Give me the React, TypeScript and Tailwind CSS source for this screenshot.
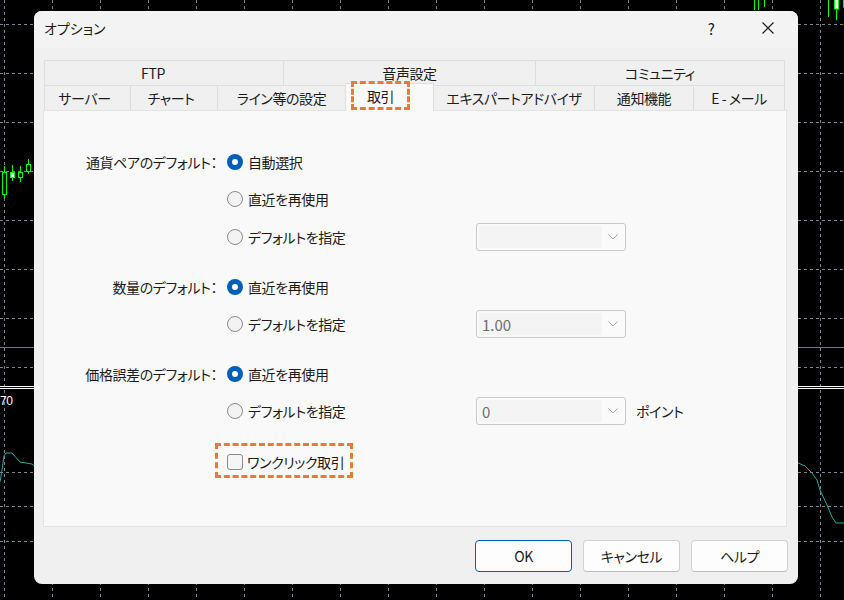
import React from "react";

const vx = Array.from({ length: 18 }, (_, i) => 4 + 48 * i);
const hy = [24, 73, 122, 171, 220, 269, 318, 367, 472, 506, 541];
const G = "#00ff00";

function ChartBg() {
  return (
    <svg className="absolute inset-0" width="844" height="600" viewBox="0 0 844 600">
      <rect width="844" height="600" fill="#000" />
      {vx.map((x) => (
        <line key={"v" + x} x1={x + 0.5} y1={0} x2={x + 0.5} y2={600} stroke="#7a8698" strokeDasharray="3 3" />
      ))}
      {hy.map((y) => (
        <line key={"h" + y} x1={0} y1={y + 0.5} x2={844} y2={y + 0.5} stroke="#7a8698" strokeDasharray="3 3" />
      ))}
      <line x1={0} y1={347.5} x2={844} y2={347.5} stroke="#6c7889" />
      <line x1={0} y1={386.5} x2={844} y2={386.5} stroke="#ffffff" />
      <line x1={0} y1={388.5} x2={844} y2={388.5} stroke="#ffffff" />
      {/* left candles */}
      <line x1={4.5} y1={166} x2={4.5} y2={198} stroke={G} />
      <rect x={2.5} y={172.5} width={4} height={22} fill="#000" stroke={G} />
      <line x1={12.5} y1={165} x2={12.5} y2={181} stroke={G} />
      <rect x={10.5} y={172.5} width={4} height={5} fill="#fff" stroke={G} />
      <line x1={20.5} y1={166} x2={20.5} y2={182} stroke={G} />
      <rect x={18.5} y={172.5} width={4} height={5} fill="#000" stroke={G} />
      <line x1={28.5} y1={159} x2={28.5} y2={174} stroke={G} />
      <rect x={26.5} y={164.5} width={4} height={7} fill="#000" stroke={G} />
      {/* top right candles */}
      <line x1={754.5} y1={0} x2={754.5} y2={10} stroke={G} />
      <line x1={758.5} y1={0} x2={758.5} y2={10} stroke={G} />
      <line x1={764.5} y1={0} x2={764.5} y2={7} stroke={G} />
      <line x1={828.5} y1={0} x2={828.5} y2={17} stroke={G} />
      <line x1={836.5} y1={0} x2={836.5} y2={20} stroke={G} />
      <rect x={834.5} y={-1} width={4} height={10} fill="#fff" stroke={G} />
      <rect x={843.5} y={-1} width={4} height={8} fill="#000" stroke={G} />
      {/* teal indicator */}
      <polyline
        points="0,482 2,470 4,456 6,453 12,453 20,462 32,464 36,467"
        fill="none"
        stroke="#1fa9a3"
      />
      <polyline
        points="796,462 805,466 812,473 817,480 820,490 827,505 832,517 836,523 844,523"
        fill="none"
        stroke="#1fa9a3"
      />
      <text x={0} y={405} fill="#ffffff" fontSize={12} fontFamily="Liberation Sans, sans-serif">
        70
      </text>
    </svg>
  );
}

function Radio({ checked }: { checked?: boolean }) {
  return checked ? (
    <span className="w-4 h-4 rounded-full bg-[#005fb8] flex items-center justify-center shrink-0">
      <span className="w-1.5 h-1.5 rounded-full bg-white" />
    </span>
  ) : (
    <span className="w-4 h-4 rounded-full border border-[#8a8a8a] bg-[#f3f3f3] shrink-0" />
  );
}

function Chevron() {
  return (
    <svg width="10" height="6" viewBox="0 0 10 6">
      <path d="M0.5 0.5 L5 5 L9.5 0.5" fill="none" stroke="#a3a3a3" strokeWidth="1" />
    </svg>
  );
}

function Select({ value }: { value?: string }) {
  return (
    <div className="w-[150px] h-[28px] border border-[#c8c8c8] rounded-[3px] bg-[#fafafa] flex items-stretch p-[2px] shrink-0">
      <div className="w-[123px] bg-[#f4f4f4] text-[#6e6e6e] pl-[3px] flex items-center text-[15px] tracking-normal">{value}</div>
      <div className="flex-1 flex items-center justify-center">
        <Chevron />
      </div>
    </div>
  );
}

function OptRow({
  label,
  checked,
  text,
  mt,
  select,
  suffix,
}: {
  label?: string;
  checked?: boolean;
  text: string;
  mt: string;
  select?: React.ReactNode;
  suffix?: string;
}) {
  return (
    <div className={"flex items-center h-[28px] " + mt}>
      <div className="w-[173px] text-right whitespace-nowrap shrink-0">{label}</div>
      <div className="ml-[10px] w-[249px] flex items-center gap-[5px] shrink-0">
        <Radio checked={checked} />
        <span className="whitespace-nowrap">{text}</span>
      </div>
      {select}
      {suffix && <span className="ml-[10px] whitespace-nowrap">{suffix}</span>}
    </div>
  );
}

function Tab({
  label,
  w,
  last,
  noLeft,
  extra,
}: {
  label: string;
  w: string;
  last?: boolean;
  noLeft?: boolean;
  extra?: string;
}) {
  return (
    <div
      className={
        "h-[25px] border-t border-[#dedede] bg-[#f0f0f0] flex items-center justify-center whitespace-nowrap shrink-0 " +
        w +
        (noLeft ? "" : " border-l") +
        (last ? " border-r" : "") +
        (extra ? " " + extra : "")
      }
    >
      {label}
    </div>
  );
}

export default function App() {
  return (
    <div className="relative w-[844px] h-[600px] overflow-hidden bg-black font-['Noto_Sans_CJK_JP',sans-serif] [font-feature-settings:'palt'] text-[14px] tracking-[-0.4px] leading-none text-[#1b1b1b]">
      <ChartBg />
      <div className="absolute left-[34px] top-[11px] w-[764px] h-[573px] rounded-[8px] bg-[#f0f0f0] overflow-hidden flex flex-col">
        {/* title bar */}
        <div className="h-[37px] bg-[#f3f3f3] flex items-center pl-[10px] pb-[3px] shrink-0">
          <span className="text-[14px] tracking-normal">オプション</span>
          <span className="ml-auto w-[46px] flex justify-center text-[15px]">?</span>
          <span className="ml-[11px] mr-[7px] w-[46px] flex justify-center">
            <svg width="12" height="12" viewBox="0 0 12 12">
              <path d="M0.5 0.5 L11.5 11.5 M11.5 0.5 L0.5 11.5" stroke="#1b1b1b" strokeWidth="1.1" fill="none" />
            </svg>
          </span>
        </div>

        {/* tabs */}
        <div className="ml-[10px] mt-[12px] w-[741px] flex flex-col shrink-0">
          <div className="flex h-[25px]">
            <Tab label="FTP" w="w-[239px]" extra="pr-[22px] pb-[1px]" />
            <Tab label="音声設定" w="w-[252px]" extra="pb-[1px]" />
            <Tab label="コミュニティ" w="w-[250px]" last extra="pb-[1px]" />
          </div>
          <div className="flex h-[25px] items-end">
            <Tab label="サーバー" w="w-[86px]" extra="pr-[6px] pb-[1px]" />
            <Tab label="チャート" w="w-[87px]" extra="pr-[6px] pb-[1px]" />
            <Tab label="ライン等の設定" w="w-[128px]" extra="pb-[1px]" />
            <div className="relative z-10 w-[89px] h-[28px] mb-[-1px] border-l border-r border-t border-[#dedede] bg-[#f9f9f9] flex items-center pl-[21px] pb-[3px] shrink-0">
              <span>取引</span>
              <div className="absolute left-[5px] top-[-3px] w-[59px] h-[29px] border-[3px] border-dashed border-[#ec7a2e]" />
            </div>
            <Tab label="エキスパートアドバイザ" w="w-[160px]" noLeft extra="pb-[1px]" />
            <Tab label="通知機能" w="w-[99px]" extra="pb-[1px]" />
            <Tab label="E - メール" w="w-[92px]" last extra="pb-[1px]" />
          </div>
        </div>

        {/* panel */}
        <div className="ml-[9px] w-[744px] h-[417px] border border-[#e3e3e3] bg-[#f9f9f9] flex flex-col shrink-0">
          <OptRow label="通貨ペアのデフォルト：" checked text="自動選択" mt="mt-[37px]" />
          <OptRow text="直近を再使用" mt="mt-[9px]" />
          <OptRow text="デフォルトを指定" mt="mt-[10px]" select={<Select />} />
          <OptRow label="数量のデフォルト：" checked text="直近を再使用" mt="mt-[22px]" />
          <OptRow text="デフォルトを指定" mt="mt-[9px]" select={<Select value="1.00" />} />
          <OptRow label="価格誤差のデフォルト：" checked text="直近を再使用" mt="mt-[22px]" />
          <OptRow text="デフォルトを指定" mt="mt-[9px]" select={<Select value="0" />} suffix="ポイント" />
          <div className="flex items-center h-[28px] mt-[23px]">
            <div className="w-[173px] shrink-0" />
            <div className="ml-[10px] relative h-[28px] flex items-center gap-[4px]">
              <span className="w-4 h-4 rounded-[3px] border border-[#8a8a8a] bg-[#f5f5f5] shrink-0" />
              <span className="whitespace-nowrap">ワンクリック取引</span>
              <div className="absolute left-[-12px] top-[-5px] w-[138px] h-[35px] border-[3px] border-dashed border-[#ec7a2e]" />
            </div>
          </div>
        </div>

        {/* buttons */}
        <div className="mt-[13px] flex justify-end gap-[11px] pr-[10px] shrink-0">
          <button className="w-[97px] h-[32px] rounded-[4px] border border-[#005fb8] bg-[#fdfdfd] flex items-center justify-center pb-[1px]">
            OK
          </button>
          <button className="w-[97px] h-[32px] rounded-[4px] border border-[#d0d0d0] border-b-[#bdbdbd] bg-[#fdfdfd] flex items-center justify-center pb-[1px]">
            キャンセル
          </button>
          <button className="w-[97px] h-[32px] rounded-[4px] border border-[#d0d0d0] border-b-[#bdbdbd] bg-[#fdfdfd] flex items-center justify-center pb-[1px]">
            ヘルプ
          </button>
        </div>
      </div>
    </div>
  );
}
